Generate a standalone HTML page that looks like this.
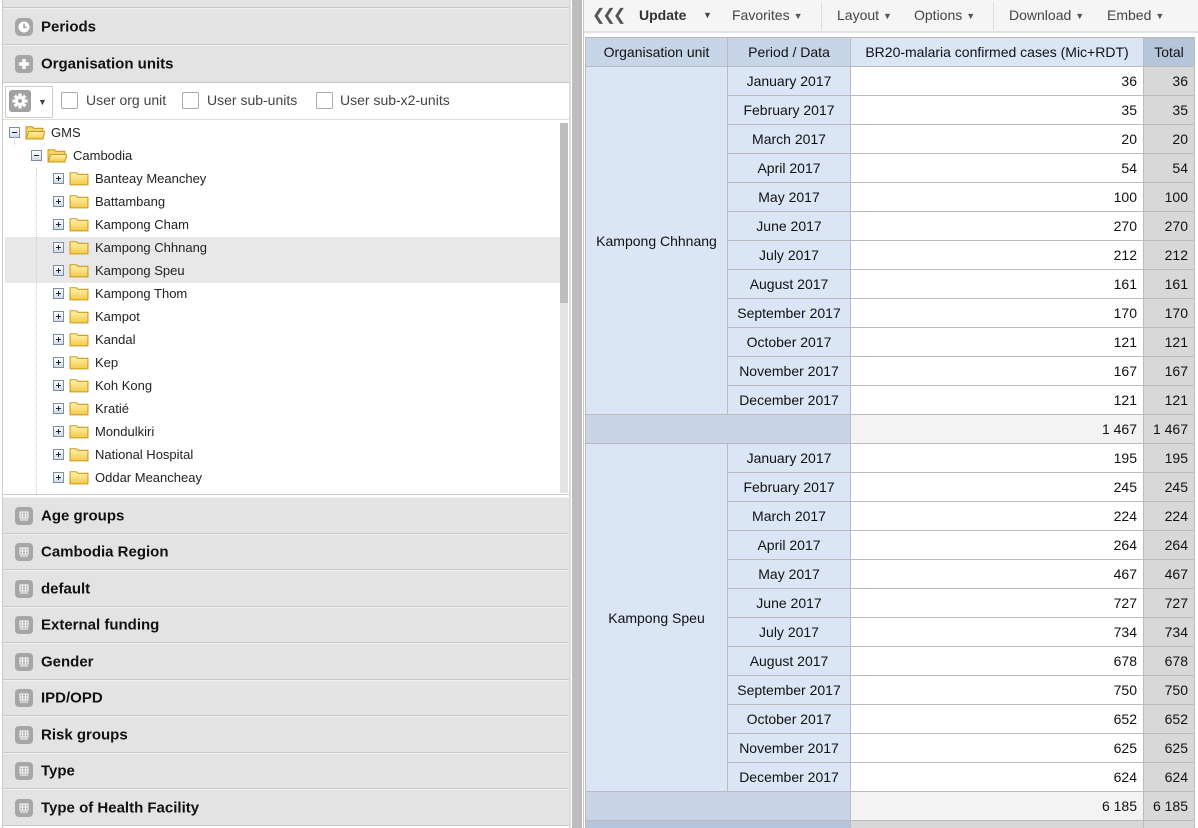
<!DOCTYPE html>
<html style="width:1198px;height:828px;overflow:hidden"><head><meta charset="utf-8"><style>
*{box-sizing:border-box;margin:0;padding:0}
body{width:1198px;height:828px;overflow:hidden;background:#fff;font-family:"Liberation Sans",Arial,sans-serif;position:relative}
.hd{position:absolute;left:3px;width:566px;background:#e3e3e3;border-bottom:1px solid #c8c8c8;border-top:1px solid #f0f0f0;font-weight:bold;font-size:15px;color:#111}
.hd span{position:absolute;left:38px;top:50%;transform:translateY(-50%)}
.ic{position:absolute;left:12px;top:50%;margin-top:-9px;width:18px;height:18px;border-radius:4px;background:#a6a6a6}
.tr{position:absolute;height:23px;font-size:13px;color:#222;line-height:23px;white-space:nowrap}
.pm{display:inline-block;width:11px;height:11px;border:1px solid #7a8ea8;background:linear-gradient(#fff,#d4dbe6);vertical-align:-1px;position:relative;margin-right:5px}
.pm:before{content:"";position:absolute;left:2px;top:4px;width:5px;height:1px;background:#223}
.pm.p:after{content:"";position:absolute;left:4px;top:2px;width:1px;height:5px;background:#223}
.fd{display:inline-block;width:20px;height:16px;vertical-align:-3px;margin-right:6px}
.sel{position:absolute;left:5px;width:556px;height:46px;top:237px;background:#e8e8e8}
table{position:absolute;left:585px;top:37px;border-collapse:collapse;table-layout:fixed;font-size:14px;color:#111}
td{border:1px solid #bbb;height:29px;padding:0 6px;white-space:nowrap}
.h{background:#c7d5e8;text-align:center}
.d{background:#dae5f6;text-align:center}
.v{background:#fff;text-align:right}
.t{background:#d8d8d8;text-align:right}
.th{background:#b6c5da;text-align:center}
.s{background:#c8d4e6}
.sv{background:#f3f3f3;text-align:right}
.tb{position:absolute;top:0;height:33px;font-size:14px;color:#444;line-height:31px}
.car{font-size:9px;color:#555;margin-left:4px;vertical-align:1px}
.cb{position:absolute;top:92px;width:17px;height:17px;border:1px solid #aaa;border-radius:2px;background:#fff}
.cl{position:absolute;top:92px;font-size:14px;color:#444}
</style></head><body>
<div style="position:absolute;left:0;top:0;width:3px;height:828px;background:#fff;border-right:1px solid #ccc"></div>
<div style="position:absolute;left:3px;top:0;width:566px;height:8px;background:#e3e3e3;border-bottom:1px solid #c8c8c8"></div>
<div style="position:absolute;left:569px;top:0;width:2px;height:828px;background:#ddd"></div>
<div class="hd" style="top:8px;height:37px"><i class="ic" style="border-radius:5px"><svg width="18" height="18"><circle cx="9" cy="9" r="5.5" fill="#fff"/><path d="M9 5.5V9.3h2.6" stroke="#a6a6a6" stroke-width="1.6" fill="none"/></svg></i><span>Periods</span></div>
<div class="hd" style="top:45px;height:38px"><i class="ic"><svg width="18" height="18"><path d="M9 4v10M4 9h10" stroke="#fff" stroke-width="3.4"/></svg></i><span>Organisation units</span></div>
<div style="position:absolute;left:3px;top:83px;width:566px;height:37px;background:#fff;border-bottom:1px solid #ddd"></div>
<div style="position:absolute;left:5px;top:86px;width:48px;height:32px;border:1px solid #ccc;background:#fff"></div>
<div style="position:absolute;left:9px;top:90px;width:22px;height:22px;border-radius:3px;background:#a2a2a2"><svg width="22" height="22"><g fill="#fff" transform="translate(11 11)"><circle r="5"/><rect x="-1.6" y="-7.5" width="3.2" height="15"/><rect x="-7.5" y="-1.6" width="15" height="3.2"/><g transform="rotate(45)"><rect x="-1.6" y="-7.5" width="3.2" height="15"/><rect x="-7.5" y="-1.6" width="15" height="3.2"/></g></g><circle cx="11" cy="11" r="2" fill="#a2a2a2"/></svg></div>
<span style="position:absolute;left:38px;top:97px;font-size:9px;color:#444">▼</span>
<div class="cb" style="left:61px"></div><span class="cl" style="left:86px">User org unit</span>
<div class="cb" style="left:182px"></div><span class="cl" style="left:207px">User sub-units</span>
<div class="cb" style="left:316px"></div><span class="cl" style="left:340px">User sub-x2-units</span>
<div class="sel"></div>
<div style="position:absolute;left:560px;top:123px;width:8px;height:180px;background:#bdbdbd"></div>
<div style="position:absolute;left:560px;top:303px;width:8px;height:190px;background:#e4e4e4"></div>
<div style="position:absolute;left:3px;top:494px;width:566px;height:1px;background:#ccc"></div>
<svg width="0" height="0" style="position:absolute"><defs><linearGradient id="g" x1="0" y1="0" x2="0" y2="1"><stop offset="0" stop-color="#fff3b0"/><stop offset="1" stop-color="#f3c94a"/></linearGradient></defs></svg>
<div class="tr" style="left:9px;top:121px"><i class="pm"></i><svg class="fd" viewBox="0 0 19 15"><path d="M1 2.5h6l1.5 1.5H17v10H1z" fill="#f5d46a" stroke="#c99a1a"/><path d="M1 14l2.5-7H19l-2 7z" fill="url(#g)" stroke="#c99a1a"/></svg>GMS</div>
<div class="tr" style="left:31px;top:144px"><i class="pm"></i><svg class="fd" viewBox="0 0 19 15"><path d="M1 2.5h6l1.5 1.5H17v10H1z" fill="#f5d46a" stroke="#c99a1a"/><path d="M1 14l2.5-7H19l-2 7z" fill="url(#g)" stroke="#c99a1a"/></svg>Cambodia</div>
<div style="position:absolute;left:36px;top:168px;height:326px;border-left:1px dotted #ccc"></div>
<div style="position:absolute;left:14px;top:136px;height:10px;border-left:1px dotted #ccc"></div>
<div class="tr" style="left:53px;top:167px"><i class="pm p"></i><svg class="fd" viewBox="0 0 19 15"><path d="M1 2.5h6l1.5 1.5H18v10H1z" fill="url(#g)" stroke="#c99a1a"/></svg>Banteay Meanchey</div>
<div class="tr" style="left:53px;top:190px"><i class="pm p"></i><svg class="fd" viewBox="0 0 19 15"><path d="M1 2.5h6l1.5 1.5H18v10H1z" fill="url(#g)" stroke="#c99a1a"/></svg>Battambang</div>
<div class="tr" style="left:53px;top:213px"><i class="pm p"></i><svg class="fd" viewBox="0 0 19 15"><path d="M1 2.5h6l1.5 1.5H18v10H1z" fill="url(#g)" stroke="#c99a1a"/></svg>Kampong Cham</div>
<div class="tr" style="left:53px;top:236px"><i class="pm p"></i><svg class="fd" viewBox="0 0 19 15"><path d="M1 2.5h6l1.5 1.5H18v10H1z" fill="url(#g)" stroke="#c99a1a"/></svg>Kampong Chhnang</div>
<div class="tr" style="left:53px;top:259px"><i class="pm p"></i><svg class="fd" viewBox="0 0 19 15"><path d="M1 2.5h6l1.5 1.5H18v10H1z" fill="url(#g)" stroke="#c99a1a"/></svg>Kampong Speu</div>
<div class="tr" style="left:53px;top:282px"><i class="pm p"></i><svg class="fd" viewBox="0 0 19 15"><path d="M1 2.5h6l1.5 1.5H18v10H1z" fill="url(#g)" stroke="#c99a1a"/></svg>Kampong Thom</div>
<div class="tr" style="left:53px;top:305px"><i class="pm p"></i><svg class="fd" viewBox="0 0 19 15"><path d="M1 2.5h6l1.5 1.5H18v10H1z" fill="url(#g)" stroke="#c99a1a"/></svg>Kampot</div>
<div class="tr" style="left:53px;top:328px"><i class="pm p"></i><svg class="fd" viewBox="0 0 19 15"><path d="M1 2.5h6l1.5 1.5H18v10H1z" fill="url(#g)" stroke="#c99a1a"/></svg>Kandal</div>
<div class="tr" style="left:53px;top:351px"><i class="pm p"></i><svg class="fd" viewBox="0 0 19 15"><path d="M1 2.5h6l1.5 1.5H18v10H1z" fill="url(#g)" stroke="#c99a1a"/></svg>Kep</div>
<div class="tr" style="left:53px;top:374px"><i class="pm p"></i><svg class="fd" viewBox="0 0 19 15"><path d="M1 2.5h6l1.5 1.5H18v10H1z" fill="url(#g)" stroke="#c99a1a"/></svg>Koh Kong</div>
<div class="tr" style="left:53px;top:397px"><i class="pm p"></i><svg class="fd" viewBox="0 0 19 15"><path d="M1 2.5h6l1.5 1.5H18v10H1z" fill="url(#g)" stroke="#c99a1a"/></svg>Kratié</div>
<div class="tr" style="left:53px;top:420px"><i class="pm p"></i><svg class="fd" viewBox="0 0 19 15"><path d="M1 2.5h6l1.5 1.5H18v10H1z" fill="url(#g)" stroke="#c99a1a"/></svg>Mondulkiri</div>
<div class="tr" style="left:53px;top:443px"><i class="pm p"></i><svg class="fd" viewBox="0 0 19 15"><path d="M1 2.5h6l1.5 1.5H18v10H1z" fill="url(#g)" stroke="#c99a1a"/></svg>National Hospital</div>
<div class="tr" style="left:53px;top:466px"><i class="pm p"></i><svg class="fd" viewBox="0 0 19 15"><path d="M1 2.5h6l1.5 1.5H18v10H1z" fill="url(#g)" stroke="#c99a1a"/></svg>Oddar Meancheay</div>
<div style="position:absolute;left:3px;top:495px;width:566px;height:2px;background:#fff"></div>
<div class="hd" style="top:497px;height:37px"><i class="ic"><svg width="18" height="18"><path d="M5 5h8v6H5z" fill="none" stroke="#fff"/><path d="M7.5 5v6M10.5 5v6M5 8h8M5 13h8" stroke="#fff"/></svg></i><span>Age groups</span></div>
<div class="hd" style="top:534px;height:36px"><i class="ic"><svg width="18" height="18"><path d="M5 5h8v6H5z" fill="none" stroke="#fff"/><path d="M7.5 5v6M10.5 5v6M5 8h8M5 13h8" stroke="#fff"/></svg></i><span>Cambodia Region</span></div>
<div class="hd" style="top:570px;height:37px"><i class="ic"><svg width="18" height="18"><path d="M5 5h8v6H5z" fill="none" stroke="#fff"/><path d="M7.5 5v6M10.5 5v6M5 8h8M5 13h8" stroke="#fff"/></svg></i><span>default</span></div>
<div class="hd" style="top:607px;height:36px"><i class="ic"><svg width="18" height="18"><path d="M5 5h8v6H5z" fill="none" stroke="#fff"/><path d="M7.5 5v6M10.5 5v6M5 8h8M5 13h8" stroke="#fff"/></svg></i><span>External funding</span></div>
<div class="hd" style="top:643px;height:37px"><i class="ic"><svg width="18" height="18"><path d="M5 5h8v6H5z" fill="none" stroke="#fff"/><path d="M7.5 5v6M10.5 5v6M5 8h8M5 13h8" stroke="#fff"/></svg></i><span>Gender</span></div>
<div class="hd" style="top:680px;height:36px"><i class="ic"><svg width="18" height="18"><path d="M5 5h8v6H5z" fill="none" stroke="#fff"/><path d="M7.5 5v6M10.5 5v6M5 8h8M5 13h8" stroke="#fff"/></svg></i><span>IPD/OPD</span></div>
<div class="hd" style="top:716px;height:37px"><i class="ic"><svg width="18" height="18"><path d="M5 5h8v6H5z" fill="none" stroke="#fff"/><path d="M7.5 5v6M10.5 5v6M5 8h8M5 13h8" stroke="#fff"/></svg></i><span>Risk groups</span></div>
<div class="hd" style="top:753px;height:36px"><i class="ic"><svg width="18" height="18"><path d="M5 5h8v6H5z" fill="none" stroke="#fff"/><path d="M7.5 5v6M10.5 5v6M5 8h8M5 13h8" stroke="#fff"/></svg></i><span>Type</span></div>
<div class="hd" style="top:789px;height:37px"><i class="ic"><svg width="18" height="18"><path d="M5 5h8v6H5z" fill="none" stroke="#fff"/><path d="M7.5 5v6M10.5 5v6M5 8h8M5 13h8" stroke="#fff"/></svg></i><span>Type of Health Facility</span></div>
<div style="position:absolute;left:571px;top:0;width:1px;height:828px;background:#fff"></div>
<div style="position:absolute;left:572px;top:0;width:10px;height:828px;background:#bdbdbd"></div>
<div style="position:absolute;left:582px;top:0;width:1px;height:828px;background:#fff"></div>
<div style="position:absolute;left:583px;top:0;width:1px;height:828px;background:#c8c8c8"></div>
<div style="position:absolute;left:584px;top:0;width:614px;height:33px;background:#f5f5f5;border-bottom:2px solid #e2e2e2"></div>
<div class="tb" style="left:592px;color:#555;font-size:16px;letter-spacing:-3px">❮❮❮</div>
<div class="tb" style="left:639px;font-weight:bold;color:#333">Update</div>
<div class="tb" style="left:703px;font-size:9px;color:#444">▼</div>
<div class="tb" style="left:732px">Favorites<span class="car">▼</span></div>
<div style="position:absolute;left:821px;top:2px;width:1px;height:28px;background:#ddd"></div>
<div class="tb" style="left:837px">Layout<span class="car">▼</span></div>
<div class="tb" style="left:914px">Options<span class="car">▼</span></div>
<div style="position:absolute;left:993px;top:2px;width:1px;height:28px;background:#ddd"></div>
<div class="tb" style="left:1009px">Download<span class="car">▼</span></div>
<div class="tb" style="left:1107px">Embed<span class="car">▼</span></div>
<div style="position:absolute;left:585px;top:37px;width:613px;height:791px;overflow:hidden">
<table style="left:0;top:0">
<colgroup><col style="width:142px"><col style="width:123px"><col style="width:293px"><col style="width:51px"></colgroup>
<tr><td class="h">Organisation unit</td><td class="h">Period / Data</td><td class="d">BR20-malaria confirmed cases (Mic+RDT)</td><td class="th">Total</td></tr>
<tr><td class="d" rowspan="12">Kampong Chhnang</td><td class="d">January 2017</td><td class="v">36</td><td class="t">36</td></tr>
<tr><td class="d">February 2017</td><td class="v">35</td><td class="t">35</td></tr>
<tr><td class="d">March 2017</td><td class="v">20</td><td class="t">20</td></tr>
<tr><td class="d">April 2017</td><td class="v">54</td><td class="t">54</td></tr>
<tr><td class="d">May 2017</td><td class="v">100</td><td class="t">100</td></tr>
<tr><td class="d">June 2017</td><td class="v">270</td><td class="t">270</td></tr>
<tr><td class="d">July 2017</td><td class="v">212</td><td class="t">212</td></tr>
<tr><td class="d">August 2017</td><td class="v">161</td><td class="t">161</td></tr>
<tr><td class="d">September 2017</td><td class="v">170</td><td class="t">170</td></tr>
<tr><td class="d">October 2017</td><td class="v">121</td><td class="t">121</td></tr>
<tr><td class="d">November 2017</td><td class="v">167</td><td class="t">167</td></tr>
<tr><td class="d">December 2017</td><td class="v">121</td><td class="t">121</td></tr>
<tr><td class="s" colspan="2"></td><td class="sv">1 467</td><td class="t">1 467</td></tr>
<tr><td class="d" rowspan="12">Kampong Speu</td><td class="d">January 2017</td><td class="v">195</td><td class="t">195</td></tr>
<tr><td class="d">February 2017</td><td class="v">245</td><td class="t">245</td></tr>
<tr><td class="d">March 2017</td><td class="v">224</td><td class="t">224</td></tr>
<tr><td class="d">April 2017</td><td class="v">264</td><td class="t">264</td></tr>
<tr><td class="d">May 2017</td><td class="v">467</td><td class="t">467</td></tr>
<tr><td class="d">June 2017</td><td class="v">727</td><td class="t">727</td></tr>
<tr><td class="d">July 2017</td><td class="v">734</td><td class="t">734</td></tr>
<tr><td class="d">August 2017</td><td class="v">678</td><td class="t">678</td></tr>
<tr><td class="d">September 2017</td><td class="v">750</td><td class="t">750</td></tr>
<tr><td class="d">October 2017</td><td class="v">652</td><td class="t">652</td></tr>
<tr><td class="d">November 2017</td><td class="v">625</td><td class="t">625</td></tr>
<tr><td class="d">December 2017</td><td class="v">624</td><td class="t">624</td></tr>
<tr><td class="s" colspan="2"></td><td class="sv">6 185</td><td class="t">6 185</td></tr>
<tr><td class="th" colspan="2"></td><td class="t"></td><td class="t"></td></tr>
</table>
</div>
</body></html>
